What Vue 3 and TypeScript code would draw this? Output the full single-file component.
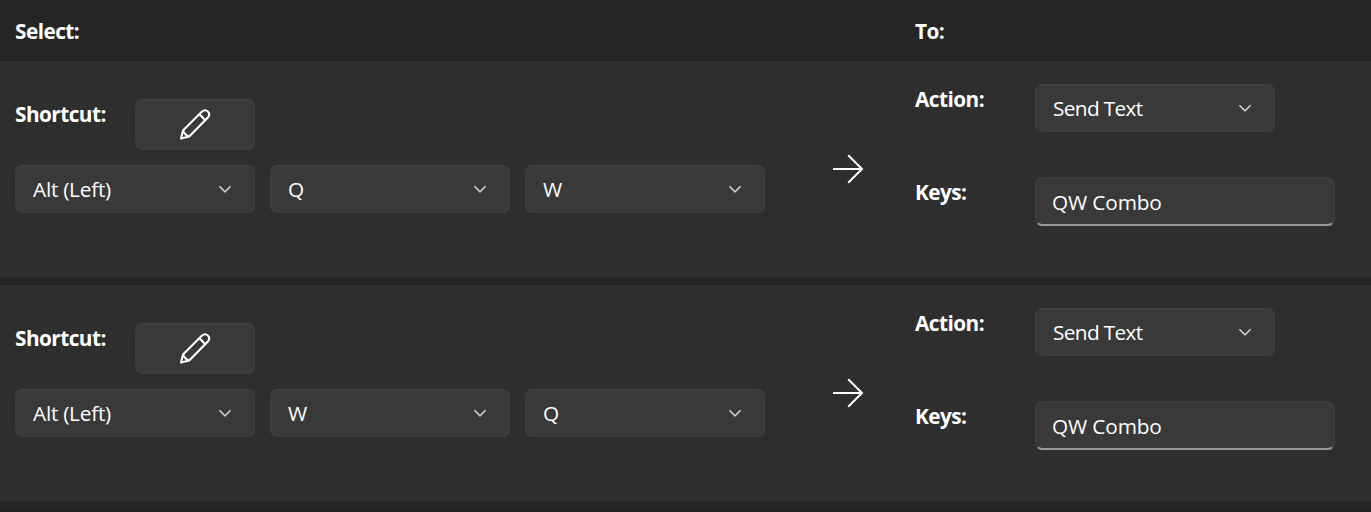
<script setup lang="ts">
interface Remap {
  id: number
  keys: string[]
  action: string
  text: string
}

const remaps: Remap[] = [
  { id: 1, keys: ['Alt (Left)', 'Q', 'W'], action: 'Send Text', text: 'QW Combo' },
  { id: 2, keys: ['Alt (Left)', 'W', 'Q'], action: 'Send Text', text: 'QW Combo' },
]
</script>

<template>
  <main class="page">
    <header class="header">
      <span class="label select">Select:</span>
      <span class="label">To:</span>
    </header>
    <section v-for="r in remaps" :key="r.id" class="row">
      <div class="source">
        <div class="shortcut">
          <span class="label">Shortcut:</span>
          <button class="control edit" type="button" aria-label="Edit">
            <svg width="34" height="34" viewBox="0 0 34 34" fill="none" stroke="#fff" stroke-width="2.1" stroke-linejoin="round">
              <path d="M3 30.6 L5 22.4 L24 3.6 C28.2 0 33.4 5.2 29.9 9.5 L11.2 28.4 Z" />
              <path d="M21.4 6.2 L27.4 12.2 M5 22.4 C6 25.4 8 27.5 11.2 28.4" />
            </svg>
          </button>
        </div>
        <div class="keys">
          <div v-for="(k, i) in r.keys" :key="i" class="control combo">
            <span class="value">{{ k }}</span>
            <svg class="chevron" width="14" height="10" viewBox="0 0 14 10"><path d="M1.4 2.2 L7 7.8 L12.6 2.2" /></svg>
          </div>
        </div>
      </div>
      <svg class="arrow" width="32" height="30" viewBox="0 0 32 30"><path d="M1 15 H30 M16.2 1.2 L30 15 L16.2 28.8" /></svg>
      <div class="target">
        <div class="field action">
          <span class="label">Action:</span>
          <div class="control combo">
            <span class="value send">{{ r.action }}</span>
            <svg class="chevron" width="14" height="10" viewBox="0 0 14 10"><path d="M1.4 2.2 L7 7.8 L12.6 2.2" /></svg>
          </div>
        </div>
        <div class="field">
          <span class="label">Keys:</span>
          <div class="control textbox"><span class="value text">{{ r.text }}</span></div>
        </div>
      </div>
    </section>
  </main>
</template>

<style>
body {
  margin: 0;
  background: #252525;
}
</style>

<style scoped>
.page {
  width: 1371px;
  height: 512px;
  overflow: hidden;
  background: #252525;
  color: #fff;
  font-family: "Open Sans", "Noto Sans", sans-serif;
  font-size: 20.8px;
  line-height: 28px;
}
.header {
  display: flex;
  box-sizing: border-box;
  height: 61px;
  padding: 17px 0 0 15px;
  border-bottom: 2px solid #222;
}
.select {
  width: 900px;
}
.label {
  font-weight: 700;
  letter-spacing: -0.55px;
  white-space: nowrap;
}
.row {
  display: flex;
  box-sizing: border-box;
  height: 217px;
  padding-left: 15px;
  background: #2e2e2e;
}
.row + .row {
  margin-top: 5px;
  border-top: 2px solid #222;
  height: 219px;
}
.row:last-child {
  box-shadow: 0 8px #252525, 0 10px #222;
}
.source {
  width: 750px;
  padding-top: 38px;
}
.shortcut {
  display: flex;
}
.shortcut .label {
  width: 120px;
  padding-top: 1px;
}
.keys {
  display: flex;
  gap: 15px;
  margin-top: 15px;
}
.control {
  display: flex;
  align-items: center;
  box-sizing: border-box;
  border: 2px solid #3d3d3d;
  border-top-color: #404040;
  border-radius: 7px;
  background: #393939;
}
.edit {
  justify-content: center;
  width: 120px;
  height: 51px;
  padding: 0;
}
.combo {
  justify-content: space-between;
  width: 240px;
  height: 48px;
  padding: 0 21px 0 16px;
}
.value {
  letter-spacing: -0.25px;
  white-space: nowrap;
}
.value.send {
  letter-spacing: -0.65px;
}
.value.text {
  letter-spacing: -0.15px;
}
.chevron path {
  fill: none;
  stroke: #cfcfcf;
  stroke-width: 1.6;
}
.arrow {
  margin: 93px 51px 0 67px;
}
.arrow path {
  fill: none;
  stroke: #fff;
  stroke-width: 2;
}
.target {
  padding-top: 23px;
}
.field {
  display: flex;
}
.field .label {
  width: 120px;
  padding-top: 1px;
}
.action {
  margin-bottom: 45px;
}
.textbox {
  width: 300px;
  height: 49px;
  padding-left: 15px;
  border-top-color: #3d3d3d;
  border-bottom-color: #9a9a9a;
}
</style>
